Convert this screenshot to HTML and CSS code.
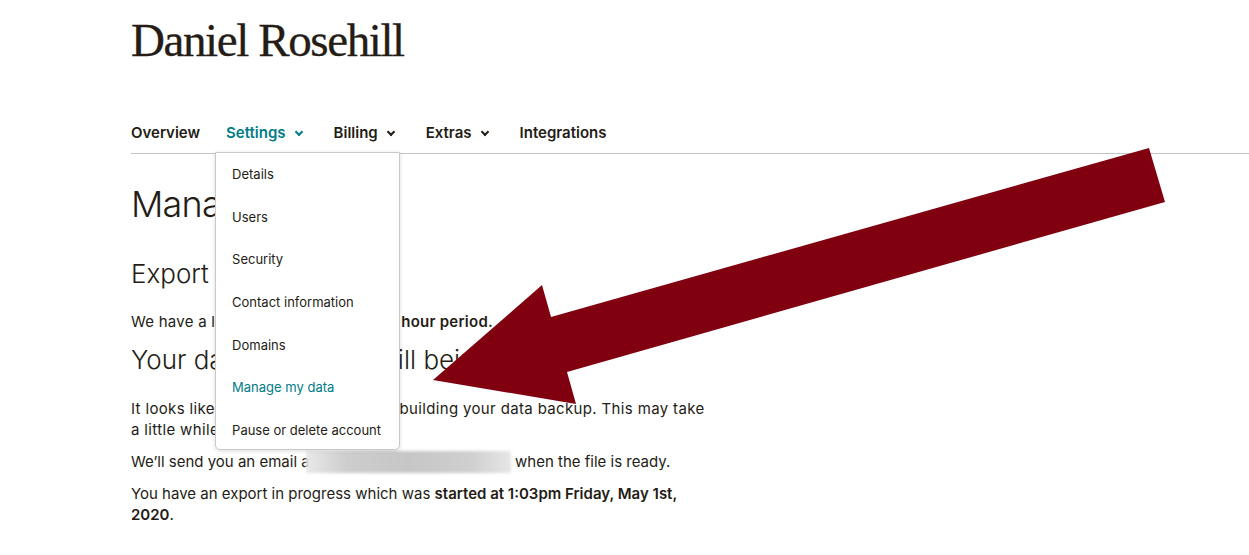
FILE: index.html
```html
<!DOCTYPE html>
<html lang="en">
<head>
<meta charset="utf-8">
<title>Manage my data</title>
<link rel="stylesheet" href="styles.css">
</head>
<body>
<header class="header">
  <h1 class="account-name">Daniel Rosehill</h1>
</header>
<nav class="nav">
  <ul class="nav-list">
    <li class="nav-item">Overview</li>
    <li class="nav-item nav-item--active has-menu">Settings <span class="chev"></span>
      <ul class="dropdown">
        <li class="dropdown-item">Details</li>
        <li class="dropdown-item">Users</li>
        <li class="dropdown-item">Security</li>
        <li class="dropdown-item">Contact information</li>
        <li class="dropdown-item">Domains</li>
        <li class="dropdown-item dropdown-item--active">Manage my data</li>
        <li class="dropdown-item">Pause or delete account</li>
      </ul>
    </li>
    <li class="nav-item has-menu">Billing <span class="chev"></span></li>
    <li class="nav-item has-menu">Extras <span class="chev"></span></li>
    <li class="nav-item">Integrations</li>
  </ul>
</nav>
<main class="content">
  <h2 class="page-title">Manage my data</h2>
  <h3 class="section-title">Export data</h3>
  <p class="text text--after-export">We have a limit of one export per <strong>24 hour period.</strong></p>
  <h3 class="section-title section-title--tight">Your data backup is still being built.</h3>
  <p class="text text--first">It looks like you’re in the process of building your data backup. This may take a little while.</p>
  <p class="text">We’ll send you an email at <span class="blur"></span> when the file is ready.</p>
  <p class="text text--last">You have an export in progress which was <strong>started at 1:03pm Friday, May 1st, 2020</strong>.</p>
</main>
<svg class="arrow" width="1249" height="555" viewBox="0 0 1249 555" aria-hidden="true">
  <polygon points="1149,148 1165,202 567,372 576,404 433,380 542,285 551,317" fill="#80000f"/>
</svg>
</body>
</html>
```

FILE: styles.css
```css
* { box-sizing: border-box; }
html, body { margin: 0; padding: 0; background: #fff; }
body {
  font-family: Inter, "Liberation Sans", Arial, sans-serif;
  color: #241c15;
  width: 1249px;
  height: 555px;
  overflow: hidden;
  position: relative;
}
.header { padding: 14px 0 0 131px; height: 112px; }
.account-name {
  margin: 0;
  font-family: "Liberation Serif", "Times New Roman", serif;
  font-weight: 400;
  font-size: 47px;
  line-height: 52px;
  letter-spacing: -1.4px;
  color: #241c15;
  -webkit-text-stroke: 0.3px #241c15;
}
.nav { margin-left: 131px; border-bottom: 1px solid #c4c4c4; }
.nav-list {
  list-style: none; margin: 0; padding: 0;
  display: flex; align-items: center;
  height: 41px;
}
.nav-item {
  position: relative;
  font-size: 15px; font-weight: 600;
  line-height: 20px;
  margin-right: 26px;
  display: flex; align-items: center;
  padding-top: 1px;
}
.nav-item.has-menu { margin-right: 32px; }
.nav-item--active { color: #007c89; }
.chev {
  display: inline-block;
  width: 6px; height: 6px;
  border-right: 2px solid currentColor;
  border-bottom: 2px solid currentColor;
  transform: rotate(45deg);
  margin: -3px 0 0 10px;
}
.dropdown {
  position: absolute;
  left: -11px; top: 30px;
  width: 185px; height: 298px;
  margin: 0; padding: 8px 0 0;
  list-style: none;
  background: #fff;
  border: 1px solid #c9c9c9;
  border-radius: 0 0 5px 5px;
  box-shadow: 0 1px 4px rgba(0,0,0,0.14);
  z-index: 2;
}
.dropdown-item {
  font-size: 13px; font-weight: 400;
  color: #241c15;
  padding-left: 16px;
  height: 42.7px;
  line-height: 26px;
}
.dropdown-item--active { color: #007c89; }
.content { padding-left: 131px; width: 740px; }
.page-title {
  margin: 28px 0 0;
  font-size: 36px; font-weight: 300;
  line-height: 44px;
  letter-spacing: -0.8px;
}
.section-title {
  margin: 32px 0 0;
  font-size: 26px; font-weight: 300;
  line-height: 32px;
}
.section-title--tight { margin-top: 12px; }
.text { margin: 11px 0 0; font-size: 15px; line-height: 21px; width: 548px; }
.text--after-export { margin-top: 21px; letter-spacing: 0.25px; width: 575px; }
.text--first { margin-top: 22px; letter-spacing: 0.35px; width: 580px; }
.text--last { margin-top: 10px; }
.text strong { font-weight: 600; }
.blur {
  display: inline-block;
  width: 205px; height: 22px;
  margin-left: -13px;
  vertical-align: -6px;
  background: linear-gradient(90deg, #e9e9e9 0%, #cdcdcd 20%, #c6c6c6 50%, #cfcfcf 80%, #e6e6e6 100%);
  filter: blur(1.5px);
}
.arrow { position: absolute; left: 0; top: 0; z-index: 3; pointer-events: none; }
```
